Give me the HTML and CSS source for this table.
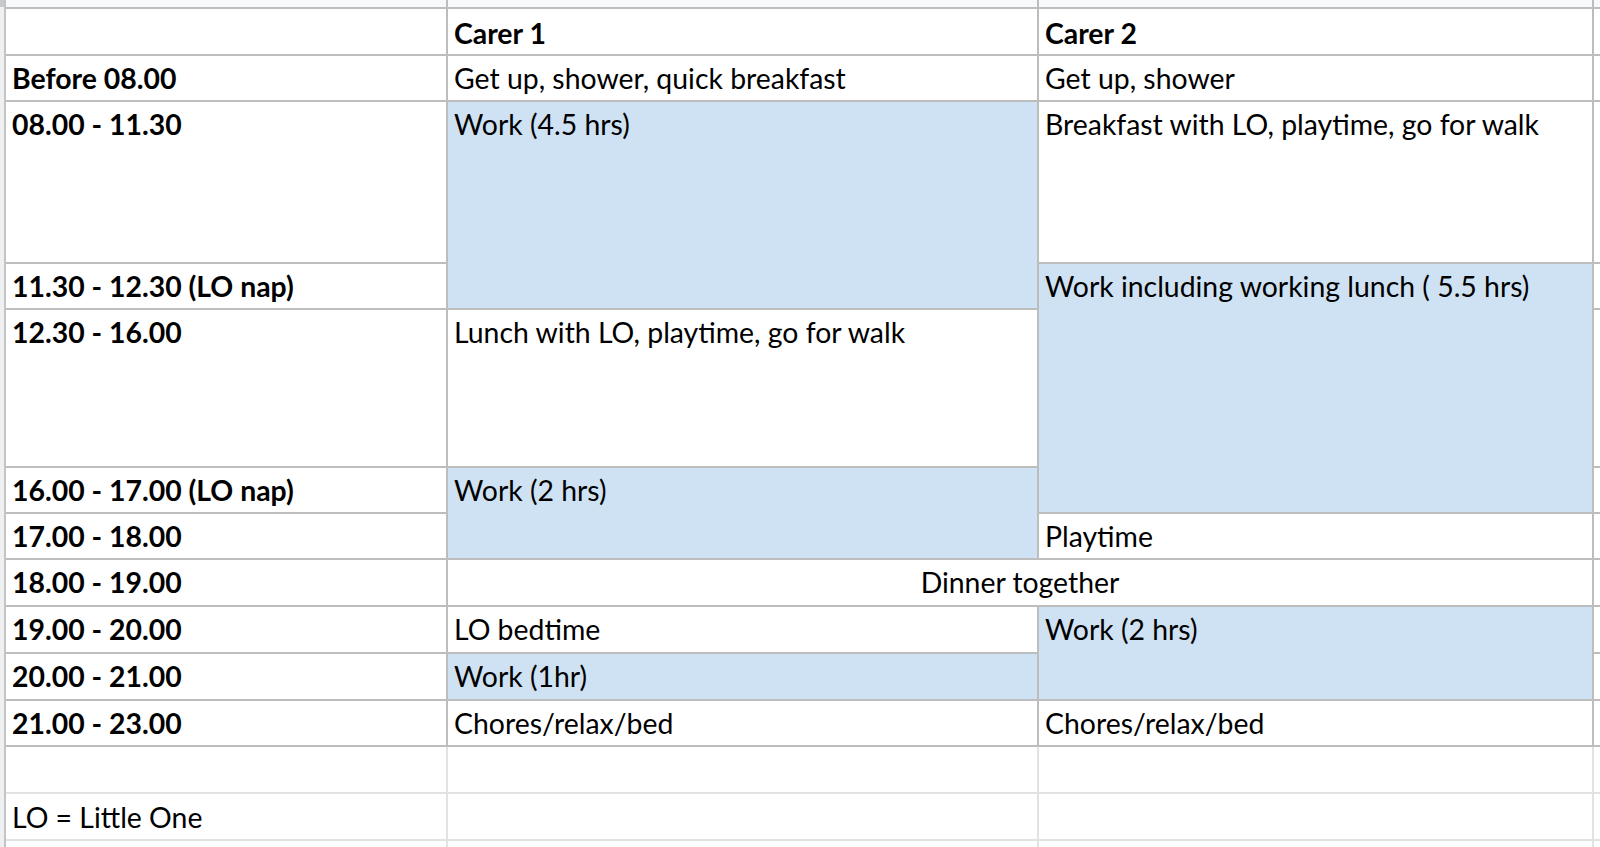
FILE: index.html
```html
<!DOCTYPE html>
<html lang="en">
<head>
<meta charset="utf-8">
<title>Carer schedule</title>
<link rel="stylesheet" href="styles.css">
</head>
<body>
<div class="sheet">
  <div class="gutter"><div class="corner"></div></div>
  <div class="sheet-body">
    <div class="grid main">
      <div class="cell sliver"></div>
      <div class="cell sliver"></div>
      <div class="cell sliver"></div>
      <div class="cell sliver"></div>

      <div class="cell head"></div>
      <div class="cell bold head">Carer 1</div>
      <div class="cell bold head">Carer 2</div>
      <div class="cell edge"></div>

      <div class="cell bold">Before 08.00</div>
      <div class="cell">Get up, shower, quick breakfast</div>
      <div class="cell">Get up, shower</div>
      <div class="cell edge"></div>

      <div class="cell bold">08.00 - 11.30</div>
      <div class="cell work rows-2">Work (4.5 hrs)</div>
      <div class="cell">Breakfast with LO, playtime, go for walk</div>
      <div class="cell edge"></div>

      <div class="cell bold">11.30 - 12.30 (LO nap)</div>
      <div class="cell work rows-3">Work including working lunch ( 5.5 hrs)</div>
      <div class="cell edge"></div>

      <div class="cell bold">12.30 - 16.00</div>
      <div class="cell">Lunch with LO, playtime, go for walk</div>
      <div class="cell edge"></div>

      <div class="cell bold">16.00 - 17.00 (LO nap)</div>
      <div class="cell work rows-2">Work (2 hrs)</div>
      <div class="cell edge"></div>

      <div class="cell bold">17.00 - 18.00</div>
      <div class="cell">Playtime</div>
      <div class="cell edge"></div>

      <div class="cell bold">18.00 - 19.00</div>
      <div class="cell cols-2 center">Dinner together</div>
      <div class="cell edge"></div>

      <div class="cell bold">19.00 - 20.00</div>
      <div class="cell">LO bedtime</div>
      <div class="cell work rows-2">Work (2 hrs)</div>
      <div class="cell edge"></div>

      <div class="cell bold">20.00 - 21.00</div>
      <div class="cell work">Work (1hr)</div>
      <div class="cell edge"></div>

      <div class="cell bold">21.00 - 23.00</div>
      <div class="cell">Chores/relax/bed</div>
      <div class="cell">Chores/relax/bed</div>
      <div class="cell edge"></div>
    </div>
    <div class="grid lower">
      <div class="cell"></div>
      <div class="cell"></div>
      <div class="cell"></div>
      <div class="cell"></div>

      <div class="cell note">LO = Little One</div>
      <div class="cell"></div>
      <div class="cell"></div>
      <div class="cell"></div>

      <div class="cell"></div>
      <div class="cell"></div>
      <div class="cell"></div>
      <div class="cell"></div>
    </div>
  </div>
</div>
</body>
</html>
```
FILE: styles.css
```css
html, body {
  margin: 0;
  padding: 0;
  background: #ffffff;
}

body {
  font-family: Lato, "Open Sans", "Liberation Sans", sans-serif;
  color: #000000;
  overflow: hidden;
}

.sheet {
  display: flex;
  width: 1600px;
  height: 847px;
  overflow: hidden;
}

.gutter {
  width: 4px;
  flex: none;
  background: #eef0f1;
  border-right: 2px solid #c4c4c4;
}

.corner {
  height: 7px;
  background: #c9c9c9;
}

.sheet-body {
  display: flex;
  flex-direction: column;
  flex: none;
  width: 1594px;
}

.grid {
  display: grid;
  grid-template-columns: 440px 589px 553px 6px;
  column-gap: 2px;
  row-gap: 2px;
}

.main {
  background: #bdbdbd;
  padding-bottom: 2px;
  grid-template-rows: 7px 45px 44px 160px 44px 156px 44px 44px 45px 45px 45px 44px;
}

.lower {
  background: #e2e2e2;
  grid-template-rows: 45px 45px 6px;
}

.cell {
  background: #ffffff;
  font-size: 28.4px;
  line-height: 1.2;
  padding: 5px 6px 0;
  white-space: nowrap;
  overflow: hidden;
}

.head {
  padding-top: 7px;
}

.sliver {
  background: #f8f9fa;
  padding: 0;
}

.edge {
  padding: 0;
}

.bold {
  font-weight: 700;
}

.work {
  background: #cfe2f3;
}

.rows-2 {
  grid-row: span 2;
}

.rows-3 {
  grid-row: span 3;
}

.cols-2 {
  grid-column: span 2;
}

.center {
  text-align: center;
}

.note {
  padding-top: 6px;
}
```
